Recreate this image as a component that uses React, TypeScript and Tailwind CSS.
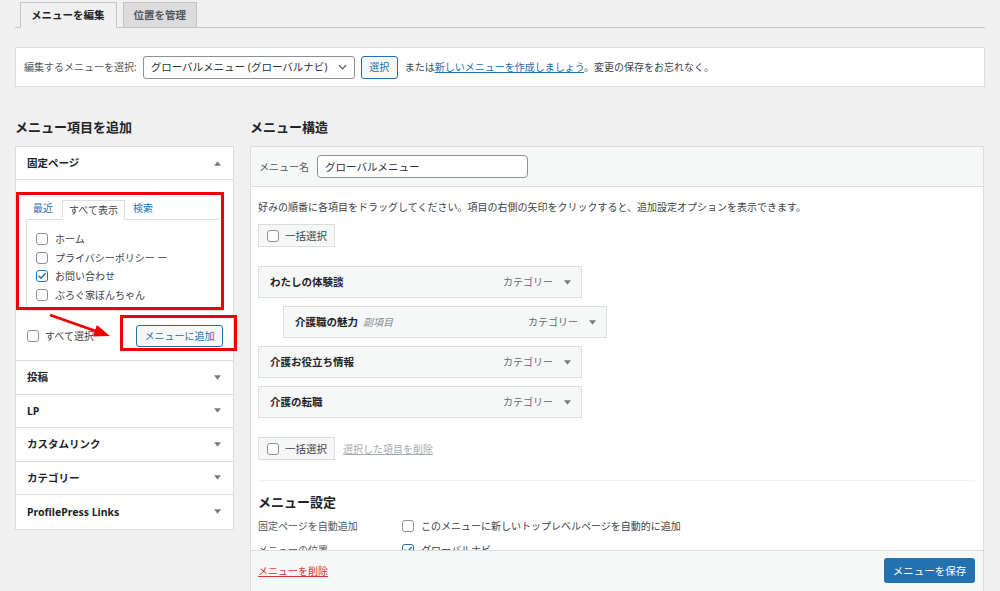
import React from "react";

function Check({ checked = false }: { checked?: boolean }) {
  return (
    <span
      className={
        checked
          ? "inline-flex h-[12px] w-[12px] shrink-0 items-center justify-center rounded-[3px] border border-[#2271b1] bg-white"
          : "inline-flex h-[12px] w-[12px] shrink-0 items-center justify-center rounded-[3px] border border-[#8c8f94] bg-white"
      }
    >
      {checked && (
        <svg viewBox="0 0 12 12" className="h-[10px] w-[10px]">
          <path d="M2.3 6.1 L4.9 8.7 L9.8 3.1" fill="none" stroke="#2271b1" strokeWidth="1.7" strokeLinecap="round" strokeLinejoin="round" />
        </svg>
      )}
    </span>
  );
}

function TriDown() {
  return (
    <svg viewBox="0 0 8 5" className="h-[5px] w-[7px]">
      <path d="M0 0 L8 0 L4 5 Z" fill="#787c82" />
    </svg>
  );
}

function TriUp() {
  return (
    <svg viewBox="0 0 8 5" className="h-[5px] w-[7px]">
      <path d="M0 5 L8 5 L4 0 Z" fill="#787c82" />
    </svg>
  );
}

function MenuItem({ title, sub, indent = false }: { title: string; sub?: string; indent?: boolean }) {
  return (
    <div
      className={
        indent
          ? "ml-[25px] flex h-[32px] w-[324px] items-center justify-between border border-[#dcdcde] bg-[#f6f7f7] pl-[11px] pr-[10px]"
          : "flex h-[32px] w-[324px] items-center justify-between border border-[#dcdcde] bg-[#f6f7f7] pl-[11px] pr-[10px]"
      }
    >
      <div className="flex items-center gap-[5px] leading-[14px]">
        <span className="text-[10.5px] font-bold text-[#1d2327]">{title}</span>
        {sub && <span className="text-[10px] italic text-[#8c8f94]">{sub}</span>}
      </div>
      <div className="flex items-center gap-[11px]">
        <span className="text-[10px] leading-[14px] text-[#646970]">カテゴリー</span>
        <TriDown />
      </div>
    </div>
  );
}

function BulkBox() {
  return (
    <div className="flex h-[23px] w-[77px] items-center gap-[6px] border border-[#dcdcde] bg-[#f6f7f7] pl-[8px]">
      <Check />
      <span className="text-[10.5px] leading-[14px] text-[#3c434a]">一括選択</span>
    </div>
  );
}

function SideRow({ label, last = false }: { label: string; last?: boolean }) {
  return (
    <div
      className={
        last
          ? "flex h-[33.5px] items-center justify-between pl-[11px] pr-[12px]"
          : "flex h-[33.5px] items-center justify-between border-b border-[#dcdcde] pl-[11px] pr-[12px]"
      }
    >
      <span className="text-[10.5px] font-bold leading-[14px] text-[#1d2327]">{label}</span>
      <TriDown />
    </div>
  );
}

export default function App() {
  return (
    <div className="relative h-[591px] w-[1000px] overflow-hidden bg-[#f0f0f1] font-['Noto_Sans','Noto_Sans_CJK_JP',sans-serif] text-[10px] text-[#3c434a]">
      {/* tabs */}
      <div className="mx-[15px] flex h-[28px] items-end gap-[6px] border-b border-[#c3c4c7] pl-[5px]">
        <div className="-mb-px flex h-[26px] items-center border border-[#c3c4c7] border-b-[#f0f0f1] bg-[#f0f0f1] pl-[10px] pr-[11px] text-[10.5px] font-bold leading-[14px] text-[#1d2327]">
          メニューを編集
        </div>
        <div className="-mb-px flex h-[26px] items-center border border-[#c3c4c7] bg-[#dcdcde] px-[10px] text-[10.5px] font-bold leading-[14px] text-[#50575e]">
          位置を管理
        </div>
      </div>

      {/* select bar */}
      <div className="mx-[15px] mt-[19px] flex h-[40px] items-center border border-[#dcdcde] bg-white pl-[8px]">
        <span className="leading-[14px] text-[#50575e]">編集するメニューを選択:</span>
        <div className="ml-[6px] flex h-[23px] w-[212px] items-center justify-between rounded-[3px] border border-[#8c8f94] bg-white pl-[7px] pr-[7px]">
          <span className="text-[10.5px] leading-[14px] text-[#2c3338]">グローバルメニュー (グローバルナビ)</span>
          <svg viewBox="0 0 10 6" className="h-[6px] w-[9px]">
            <path d="M1 1 L5 5 L9 1" fill="none" stroke="#50575e" strokeWidth="1.3" />
          </svg>
        </div>
        <div className="ml-[6px] flex h-[23px] w-[37px] items-center justify-center rounded-[3px] border border-[#2271b1] bg-[#f6f7f7] leading-[14px] text-[#2271b1]">
          選択
        </div>
        <span className="ml-[7px] leading-[14px] text-[#3c434a]">
          または<span className="text-[#2271b1] underline">新しいメニューを作成しましょう</span>。変更の保存をお忘れなく。
        </span>
      </div>

      {/* columns */}
      <div className="mt-[20px] flex">
        {/* left column */}
        <div className="ml-[15px] w-[219px]">
          <div className="flex h-[39px] items-center text-[13px] font-bold leading-[16px] text-[#1d2327]">メニュー項目を追加</div>
          <div className="border border-[#dcdcde] bg-white">
            <div className="flex h-[33px] items-center justify-between border-b border-[#dcdcde] pl-[11px] pr-[12px]">
              <span className="text-[10.5px] font-bold leading-[14px] text-[#1d2327]">固定ページ</span>
              <TriUp />
            </div>
            <div className="border-b border-[#dcdcde] px-[10px] pb-[13px] pt-[19px]">
              <div className="flex h-[20px] items-end pl-[7px]">
                <span className="mb-[4px] leading-[14px] text-[#2271b1]">最近</span>
                <span className="relative z-10 ml-[9px] -mb-px flex h-[20px] items-center border border-[#dcdcde] border-b-white bg-white px-[6px] leading-[14px] text-[#3c434a]">
                  すべて表示
                </span>
                <span className="mb-[4px] ml-[8px] leading-[14px] text-[#2271b1]">検索</span>
              </div>
              <div className="border border-[#dcdcde] bg-white pb-[6px] pl-[9px] pt-[10px]">
                {[
                  ["ホーム", false],
                  ["プライバシーポリシー ー", false],
                  ["お問い合わせ", true],
                  ["ぶろぐ家ぼんちゃん", false],
                ].map(([t, c]) => (
                  <div key={t as string} className="flex h-[18.5px] items-center gap-[7px]">
                    <Check checked={c as boolean} />
                    <span className="leading-[14px] text-[#3c434a]">{t as string}</span>
                  </div>
                ))}
              </div>
              <div className="mt-[14px] flex h-[22px] items-center justify-between">
                <div className="flex items-center gap-[6px] pl-[1px]">
                  <Check />
                  <span className="leading-[14px] text-[#3c434a]">すべて選択</span>
                </div>
                <div className="flex h-[22px] w-[87px] items-center justify-center rounded-[3px] border border-[#2271b1] bg-[#f6f7f7] leading-[14px] text-[#2271b1]">
                  メニューに追加
                </div>
              </div>
            </div>
            <SideRow label="投稿" />
            <SideRow label="LP" />
            <SideRow label="カスタムリンク" />
            <SideRow label="カテゴリー" />
            <SideRow label="ProfilePress Links" last />
          </div>
        </div>

        {/* right column */}
        <div className="ml-[16px] w-[734px]">
          <div className="flex h-[39px] items-center text-[13px] font-bold leading-[16px] text-[#1d2327]">メニュー構造</div>
          <div className="border border-[#dcdcde] bg-white">
            <div className="flex h-[40px] items-center border-b border-[#dcdcde] bg-[#f6f7f7] pl-[8px]">
              <span className="leading-[14px] text-[#50575e]">メニュー名</span>
              <div className="ml-[8px] flex h-[23px] w-[211px] items-center rounded-[4px] border border-[#8c8f94] bg-white pl-[7px] text-[10.5px] leading-[14px] text-[#2c3338]">
                グローバルメニュー
              </div>
            </div>
            <div className="h-[363px] overflow-hidden pl-[7px] pr-[8px] pt-[14px]">
              <p className="leading-[12px] text-[#3c434a]">
                好みの順番に各項目をドラッグしてください。項目の右側の矢印をクリックすると、追加設定オプションを表示できます。
              </p>
              <div className="mt-[11px]">
                <BulkBox />
              </div>
              <div className="mt-[19px] flex flex-col gap-[8px]">
                <MenuItem title="わたしの体験談" />
                <MenuItem title="介護職の魅力" sub="副項目" indent />
                <MenuItem title="介護お役立ち情報" />
                <MenuItem title="介護の転職" />
              </div>
              <div className="mt-[19px] flex items-center gap-[8px]">
                <BulkBox />
                <span className="leading-[14px] text-[#a7aaad] underline">選択した項目を削除</span>
              </div>
              <div className="mt-[20px] border-t border-[#f0f0f1]" />
              <div className="mt-[13px] text-[13px] font-bold leading-[16px] text-[#1d2327]">メニュー設定</div>
              <div className="mt-[6px] flex h-[20px] items-center">
                <span className="w-[144px] leading-[14px] text-[#50575e]">固定ページを自動追加</span>
                <div className="flex items-center gap-[7px]">
                  <Check />
                  <span className="leading-[14px] text-[#3c434a]">このメニューに新しいトップレベルページを自動的に追加</span>
                </div>
              </div>
              <div className="mt-[4px] flex h-[20px] items-center">
                <span className="w-[144px] leading-[14px] text-[#50575e]">メニューの位置</span>
                <div className="flex items-center gap-[7px]">
                  <Check checked />
                  <span className="leading-[14px] text-[#3c434a]">グローバルナビ</span>
                </div>
              </div>
            </div>
            <div className="flex h-[45px] items-start justify-between border-t border-[#dcdcde] bg-[#f6f7f7] pl-[7px] pr-[8px] pt-[7px]">
              <span className="mt-[6px] leading-[14px] text-[#d63638] underline">メニューを削除</span>
              <div className="flex h-[25px] w-[91px] items-center justify-center rounded-[3px] bg-[#2271b1] text-[10.5px] leading-[14px] text-white">
                メニューを保存
              </div>
            </div>
          </div>
        </div>
      </div>

      {/* annotations */}
      <div className="pointer-events-none absolute left-[16px] top-[192px] h-[118px] w-[208px] border-[3px] border-[#f20000]" />
      <div className="pointer-events-none absolute left-[120px] top-[315px] h-[36px] w-[117px] border-[3px] border-[#f20000]" />
      <svg className="pointer-events-none absolute left-[40px] top-[305px]" width="80" height="40" viewBox="0 0 80 40">
        <line x1="10" y1="10" x2="57" y2="26.5" stroke="#f20000" strokeWidth="2.5" />
        <path d="M70 31 L56.9 20 L52.9 31.4 Z" fill="#f20000" />
      </svg>
    </div>
  );
}
